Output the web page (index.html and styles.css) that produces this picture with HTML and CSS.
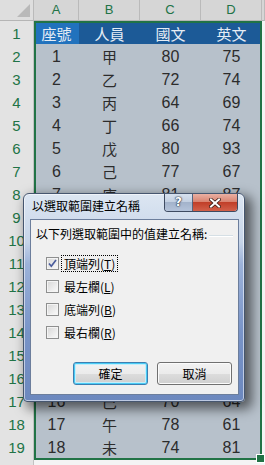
FILE: index.html
```html
<!DOCTYPE html>
<html lang="zh-TW">

<head>
    <meta charset="UTF-8">
    <title>以選取範圍建立名稱</title>
    <link rel="stylesheet" href="styles.css">
</head>

<body>
    <div class="sheet">
        <div class="row colhead">
            <div class="corner"></div>
            <div>A</div>
            <div>B</div>
            <div>C</div>
            <div>D</div>
            <div></div>
        </div>

        <div class="row hd">
            <div class="rh">1</div>
            <div class="c cn active">座號</div>
            <div class="c cn">人員</div>
            <div class="c cn">國文</div>
            <div class="c cn">英文</div>
            <div class="e"></div>
        </div>
        <div class="row"><div class="rh">2</div><div class="c">1</div><div class="c cn">甲</div><div class="c">80</div><div class="c">75</div><div class="e"></div></div>
        <div class="row"><div class="rh">3</div><div class="c">2</div><div class="c cn">乙</div><div class="c">72</div><div class="c">74</div><div class="e"></div></div>
        <div class="row"><div class="rh">4</div><div class="c">3</div><div class="c cn">丙</div><div class="c">64</div><div class="c">69</div><div class="e"></div></div>
        <div class="row"><div class="rh">5</div><div class="c">4</div><div class="c cn">丁</div><div class="c">66</div><div class="c">74</div><div class="e"></div></div>
        <div class="row"><div class="rh">6</div><div class="c">5</div><div class="c cn">戊</div><div class="c">80</div><div class="c">93</div><div class="e"></div></div>
        <div class="row"><div class="rh">7</div><div class="c">6</div><div class="c cn">己</div><div class="c">77</div><div class="c">67</div><div class="e"></div></div>
        <div class="row"><div class="rh">8</div><div class="c">7</div><div class="c cn">庚</div><div class="c">81</div><div class="c">87</div><div class="e"></div></div>
        <!-- 9 到 16 列被對話方塊蓋住 -->
        <div class="row"><div class="rh">9</div><div class="c"></div><div class="c"></div><div class="c"></div><div class="c"></div><div class="e"></div></div>
        <div class="row"><div class="rh">10</div><div class="c"></div><div class="c"></div><div class="c"></div><div class="c"></div><div class="e"></div></div>
        <div class="row"><div class="rh">11</div><div class="c"></div><div class="c"></div><div class="c"></div><div class="c"></div><div class="e"></div></div>
        <div class="row"><div class="rh">12</div><div class="c"></div><div class="c"></div><div class="c"></div><div class="c"></div><div class="e"></div></div>
        <div class="row"><div class="rh">13</div><div class="c"></div><div class="c"></div><div class="c"></div><div class="c"></div><div class="e"></div></div>
        <div class="row"><div class="rh">14</div><div class="c"></div><div class="c"></div><div class="c"></div><div class="c"></div><div class="e"></div></div>
        <div class="row"><div class="rh">15</div><div class="c"></div><div class="c"></div><div class="c"></div><div class="c"></div><div class="e"></div></div>
        <div class="row"><div class="rh">16</div><div class="c"></div><div class="c"></div><div class="c"></div><div class="c"></div><div class="e"></div></div>
        <div class="row"><div class="rh">17</div><div class="c">16</div><div class="c cn">巳</div><div class="c">70</div><div class="c">64</div><div class="e"></div></div>
        <div class="row"><div class="rh">18</div><div class="c">17</div><div class="c cn">午</div><div class="c">78</div><div class="c">61</div><div class="e"></div></div>
        <div class="row"><div class="rh">19</div><div class="c">18</div><div class="c cn">未</div><div class="c">74</div><div class="c">81</div><div class="e"></div></div>
        <div class="row"><div class="rh"></div><div class="e"></div><div class="e"></div><div class="e"></div><div class="e"></div><div class="e"></div></div>

        <!-- 選取範圍外框 -->
        <div class="sel"></div>
    </div>

    <div class="dlg">
        <div class="titlebar">
            <span class="title">以選取範圍建立名稱</span>
            <div class="capbtns">
                <div class="help">?</div>
                <div class="close">
                    <svg width="12" height="10" viewBox="0 0 12 10">
                        <path d="M2 1.5 L10 8.5 M10 1.5 L2 8.5" stroke="#3b1a14" stroke-width="3.6" stroke-linecap="square" fill="none"/>
                        <path d="M2 1.5 L10 8.5 M10 1.5 L2 8.5" stroke="#ffffff" stroke-width="2" stroke-linecap="square" fill="none"/>
                    </svg>
                </div>
            </div>
        </div>

        <div class="client">
            <div class="legend"><span>以下列選取範圍中的值建立名稱:</span></div>

            <div class="checks">
                <div class="chk">
                    <span class="box">
                        <svg width="11" height="11" viewBox="0 0 11 11">
                            <path d="M2 5.5 L4.3 8.2 L9 2" stroke="#4a5c9c" stroke-width="1.7" fill="none"/>
                        </svg>
                    </span>
                    <span class="txt focus">頂端列(<u>T</u>)</span>
                </div>
                <div class="chk"><span class="box"></span><span class="txt">最左欄(<u>L</u>)</span></div>
                <div class="chk"><span class="box"></span><span class="txt">底端列(<u>B</u>)</span></div>
                <div class="chk"><span class="box"></span><span class="txt">最右欄(<u>R</u>)</span></div>
            </div>

            <div class="btns">
                <button class="btn def">確定</button>
                <button class="btn">取消</button>
            </div>
        </div>
    </div>
</body>

</html>
```

FILE: styles.css
```css
* {
    box-sizing: border-box;
}

body {
    margin: 0;
    width: 265px;
    height: 465px;
    overflow: hidden;
    position: relative;
    background: #eeeeee;
    font-family: "Liberation Sans", "Noto Sans CJK TC", sans-serif;
}

.sheet {
    position: relative;
}

.row {
    display: grid;
    grid-template-columns: 34px 45px 61px 61px 61px 3px;
    height: 23px;
}

/* 欄名列 */
.colhead {
    height: 21px;
}

.colhead div {
    background: #d6d6d6;
    border-right: 1px solid #bababa;
    border-bottom: 1px solid #b5b5b5;
    color: #217346;
    font-size: 13px;
    line-height: 20px;
    text-align: center;
}

.colhead .corner {
    position: relative;
    background: #dedede;
}

.corner::after {
    content: "";
    position: absolute;
    right: 3px;
    bottom: 3px;
    border-left: 13px solid transparent;
    border-bottom: 13px solid #b9b9b9;
}

.rh {
    background: #e3e3e3;
    border-right: 1px solid #c2c2c2;
    border-bottom: 1px solid #c6c6c6;
    color: #217346;
    font-size: 15px;
    line-height: 22px;
    padding-top: 2px;
    text-align: center;
}

.c {
    background: #b7c1cb;
    border-bottom: 1px solid #22609e;
    color: #2c2c2c;
    font-size: 16px;
    line-height: 22px;
    padding-top: 2px;
    text-align: center;
}

.cn {
    font-family: "Noto Sans CJK TC", sans-serif;
    font-size: 15px;
}

.hd .c {
    background: #1c5a97;
    color: #e6edf5;
    border-bottom: none;
}

.hd .c.active {
    background: #2172bd;
}

.e {
    background: #f4f4f4;
    border-bottom: 1px solid #d8d8d8;
}

.sel {
    position: absolute;
    left: 34px;
    top: 21px;
    width: 228px;
    height: 439px;
    border: 2px solid #217346;
}

.sel::after {
    content: "";
    position: absolute;
    right: -5px;
    bottom: -5px;
    width: 7px;
    height: 7px;
    background: #217346;
    border: 1px solid #ffffff;
}

/* 對話方塊 */
.dlg {
    position: absolute;
    left: 23px;
    top: 193px;
    width: 222px;
    height: 209px;
    display: flex;
    flex-direction: column;
    padding: 0 5px 6px 6px;
    border: 1px solid #46566f;
    border-radius: 6px 6px 4px 4px;
    background: linear-gradient(to bottom, #dce6f2 0, #cfdbec 30px, #c6d4e8 48px, #9cb2d9 70px, #7893c7 140px, #6c88be 100%);
    box-shadow: inset 0 0 0 1px rgba(255, 255, 255, 0.55), 5px 5px 12px 2px rgba(0, 0, 0, 0.55);
    font-family: "Noto Sans CJK TC", sans-serif;
    font-size: 12px;
    color: #000;
}

.titlebar {
    display: flex;
    align-items: flex-start;
    height: 25px;
}

.title {
    padding-left: 2px;
    line-height: 24px;
}

.capbtns {
    display: flex;
    margin-left: auto;
    margin-right: 1px;
    height: 18px;
    border: 1px solid #3e4b62;
    border-top: none;
    border-radius: 0 0 4px 4px;
    overflow: hidden;
}

.help {
    width: 28px;
    border-right: 1px solid #56657e;
    background: linear-gradient(to bottom, #d7e1ee 0, #c3d0e2 45%, #a3b3cb 50%, #b4c3da 100%);
    color: #fff;
    font-family: "DejaVu Sans", sans-serif;
    font-weight: bold;
    font-size: 12px;
    line-height: 17px;
    text-align: center;
    text-shadow: 0 0 1px #2a3446, 0 0 1px #2a3446, 0 0 2px #2a3446;
}

.close {
    width: 44px;
    display: flex;
    align-items: center;
    justify-content: center;
    background: linear-gradient(to bottom, #eab0a3 0, #d98471 45%, #c13f29 50%, #d2604a 100%);
}

.client {
    flex: 1;
    display: flex;
    flex-direction: column;
    background: #f0f0f0;
    border: 1px solid #6c7e9c;
}

.legend {
    display: flex;
    align-items: center;
    height: 16px;
    margin: 5px 5px 0 5px;
    white-space: nowrap;
}

.legend::after {
    content: "";
    flex: 1;
    margin: 6px 0 0 2px;
    border-top: 1px solid #d5dfe5;
    border-bottom: 1px solid #ffffff;
}

.checks {
    margin-top: 11px;
    padding-left: 15px;
}

.chk {
    display: flex;
    align-items: center;
    height: 23px;
}

.box {
    width: 13px;
    height: 13px;
    margin-right: 2px;
    display: flex;
    align-items: center;
    justify-content: center;
    border: 1px solid #8e8f8f;
    background: linear-gradient(135deg, #d6d6d6 0, #f0f0f0 70%, #fafafa 100%);
    box-shadow: inset 0 0 0 1px #f4f4f4;
}

.txt {
    padding: 0 2px;
    line-height: 15px;
    border: 1px dotted transparent;
}

.txt.focus {
    border-color: #000;
}

.btns {
    display: flex;
    justify-content: flex-end;
    gap: 9px;
    margin-top: auto;
    padding: 0 6px 9px 0;
}

.btn {
    width: 75px;
    height: 23px;
    padding: 0;
    border: 1px solid #707070;
    border-radius: 3px;
    background: linear-gradient(to bottom, #f2f2f2 0, #ebebeb 50%, #dddddd 50%, #cfcfcf 100%);
    box-shadow: inset 0 0 0 1px #fbfbfb;
    font-family: "Noto Sans CJK TC", sans-serif;
    font-size: 12px;
    color: #000;
}

.btn.def {
    border-color: #3c7fb1;
    box-shadow: inset 0 0 0 1px #48cbf5, inset 0 0 0 2px #c4eefb;
}
```
